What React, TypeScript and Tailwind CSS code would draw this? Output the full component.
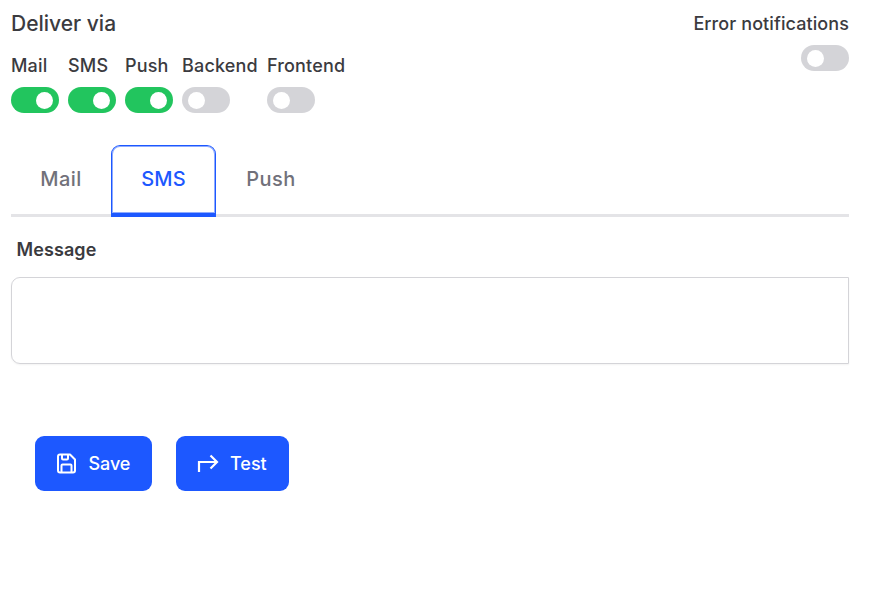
const Toggle = ({ on }: { on?: boolean }) => (
  <div className={`flex h-[26px] w-12 items-center rounded-full px-1.5 ${on ? "justify-end bg-[#22c55e]" : "justify-start bg-[#d4d4d8]"}`}>
    <div className="size-[17px] rounded-full bg-white" />
  </div>
);

const channels = [
  { label: "Mail", on: true },
  { label: "SMS", on: true },
  { label: "Push", on: true },
  { label: "Backend", on: false },
  { label: "Frontend", on: false },
];

export default function App() {
  return (
    <div className="h-[589px] w-[871px] overflow-hidden bg-white pl-[11px] pr-[22px] font-['Inter',sans-serif] font-medium text-[#3b3b3f]">
      <div className="flex h-[145px] justify-between pt-[9px]">
        <div>
          <div className="text-[21px] leading-[30px]">Deliver via</div>
          <div className="mt-[13px] flex gap-[9px] text-[18px] tracking-[0.01em]">
            {channels.map((c) => (
              <div key={c.label} className="flex min-w-12 flex-col gap-[8px] leading-[27px]">
                <span>{c.label}</span>
                <Toggle on={c.on} />
              </div>
            ))}
          </div>
        </div>
        <div className="flex flex-col items-end gap-[6px] text-[18px] leading-[30px] tracking-[0.005em]">
          <span>Error notifications</span>
          <Toggle />
        </div>
      </div>
      <div className="flex h-[72px] border-b-[3px] border-[#e4e4e7] text-[20px] leading-[68px] tracking-[0.02em] text-[#71717a]">
        <div className="w-[100px] text-center">Mail</div>
        <div className="h-[72px] w-[105px] rounded-t-[9px] border border-b-4 border-[#1d58ff] text-center leading-[66px] tracking-[0.01em] text-[#1d58ff] shadow-[inset_0_0_0_1px_#1d58ff80]">SMS</div>
        <div className="w-[110px] text-center">Push</div>
      </div>
      <div className="pl-[5.5px] pt-[19px] text-[18px] font-semibold leading-[28px] tracking-[0.005em]">Message</div>
      <div className="mt-[13px] h-[87px] rounded-l-[9px] border border-[#d4d4d8] shadow-xs" />
      <div className="ml-6 mt-[72px] flex gap-6 text-[18px] text-white">
        <button className="flex h-[55px] w-[117px] items-center gap-[11px] rounded-[9px] bg-[#1d58ff] pl-[21px]">
          <svg className="size-[21px]" viewBox="0 0 21 21" fill="none" stroke="currentColor" strokeWidth="2" strokeLinejoin="round" strokeLinecap="round"><path d="M2 3.500Q2 1.500 4 1.500H14L19 6.500V17.500Q19 19.500 17 19.500H4Q2 19.500 2 17.500ZM5.500 19V12.500Q5.500 11.500 6.500 11.500H14.500Q15.500 11.500 15.500 12.500V19M6 2V5.500Q6 6.500 7 6.500H11Q12 6.500 12 5.500V2" /></svg>
          <span className="ml-[0.5px] tracking-[-0.005em]">Save</span>
        </button>
        <button className="flex h-[55px] w-[113px] items-center gap-[11px] rounded-[9px] bg-[#1d58ff] pl-[21px]">
          <svg className="h-[20px] w-[22px]" viewBox="0 0 22 20" fill="none" stroke="currentColor" strokeWidth="2.2"><path d="M2 18V8H20M13.500 1.500L20 8L13.500 14.500" /></svg>
          <span>Test</span>
        </button>
      </div>
    </div>
  );
}
